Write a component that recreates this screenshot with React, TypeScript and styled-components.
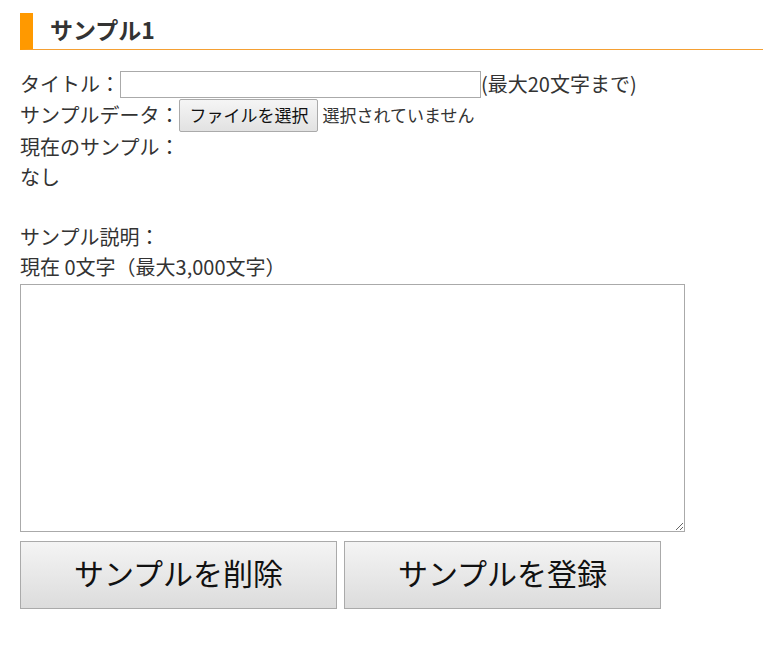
import React from "react";
import styled, { createGlobalStyle } from "styled-components";

const Global = createGlobalStyle`
  html, body { margin: 0; padding: 0; background: #fff; }
  body {
    font-family: "Noto Sans CJK JP", "Noto Sans", sans-serif;
    color: #333;
  }
`;

const Page = styled.div`
  padding: 13px 0 0 20px;
  font-size: 20px;
  line-height: 30px;
`;

const Heading = styled.h2`
  box-sizing: border-box;
  margin: 0 0 21px 0;
  height: 37px;
  display: flex;
  align-items: center;
  border-left: 13px solid #f90;
  border-bottom: 1px solid #f5a033;
  padding: 0 0 3px 17px;
  font-size: 23px;
  font-weight: bold;
  color: #333;
  line-height: 1;
`;

const Row = styled.div<{ $h?: number }>`
  display: flex;
  align-items: center;
  height: ${(p) => p.$h ?? 30}px;
  white-space: nowrap;
  padding-bottom: 2px;
  box-sizing: border-box;
`;

const TextInput = styled.input`
  box-sizing: border-box;
  width: 361px;
  height: 27px;
  border: 1px solid #aaa;
  margin: 2px 0 0 0;
  padding: 0 4px;
  font-size: 16px;
  font-family: inherit;
`;

const FileButton = styled.button`
  box-sizing: border-box;
  height: 33px;
  padding: 0 9px 2px;
  margin: 2px 4px 0 0;
  border: 1px solid #aaa;
  border-radius: 2px;
  background: linear-gradient(#f5f5f5, #e2e2e2);
  font-family: inherit;
  font-size: 17px;
  color: #111;
`;

const Note = styled.span`
  font-size: 17px;
  color: #333;
`;

const TextArea = styled.textarea`
  display: block;
  box-sizing: border-box;
  width: 665px;
  height: 248px;
  margin: 1px 0 9px 0;
  border: 1px solid #aaa;
  font-family: inherit;
  font-size: 16px;
`;

const Buttons = styled.div`
  display: flex;
  gap: 7px;
`;

const BigButton = styled.button`
  box-sizing: border-box;
  width: 317px;
  height: 68px;
  border: 1px solid #aaa;
  background: linear-gradient(#f4f4f4, #dcdcdc);
  font-family: inherit;
  font-size: 30px;
  color: #111;
  padding: 0 0 7px 0;
`;

export default function App() {
  return (
    <>
      <Global />
      <Page>
        <Heading>サンプル1</Heading>
        <Row $h={27}>
          タイトル：<TextInput type="text" />(最大20文字まで)
        </Row>
        <Row $h={35}>
          サンプルデータ：<FileButton>ファイルを選択</FileButton>
          <Note>選択されていません</Note>
        </Row>
        <Row>現在のサンプル：</Row>
        <Row>なし</Row>
        <Row />
        <Row>サンプル説明：</Row>
        <Row>現在 0文字（最大3,000文字）</Row>
        <TextArea />
        <Buttons>
          <BigButton>サンプルを削除</BigButton>
          <BigButton>サンプルを登録</BigButton>
        </Buttons>
      </Page>
    </>
  );
}
